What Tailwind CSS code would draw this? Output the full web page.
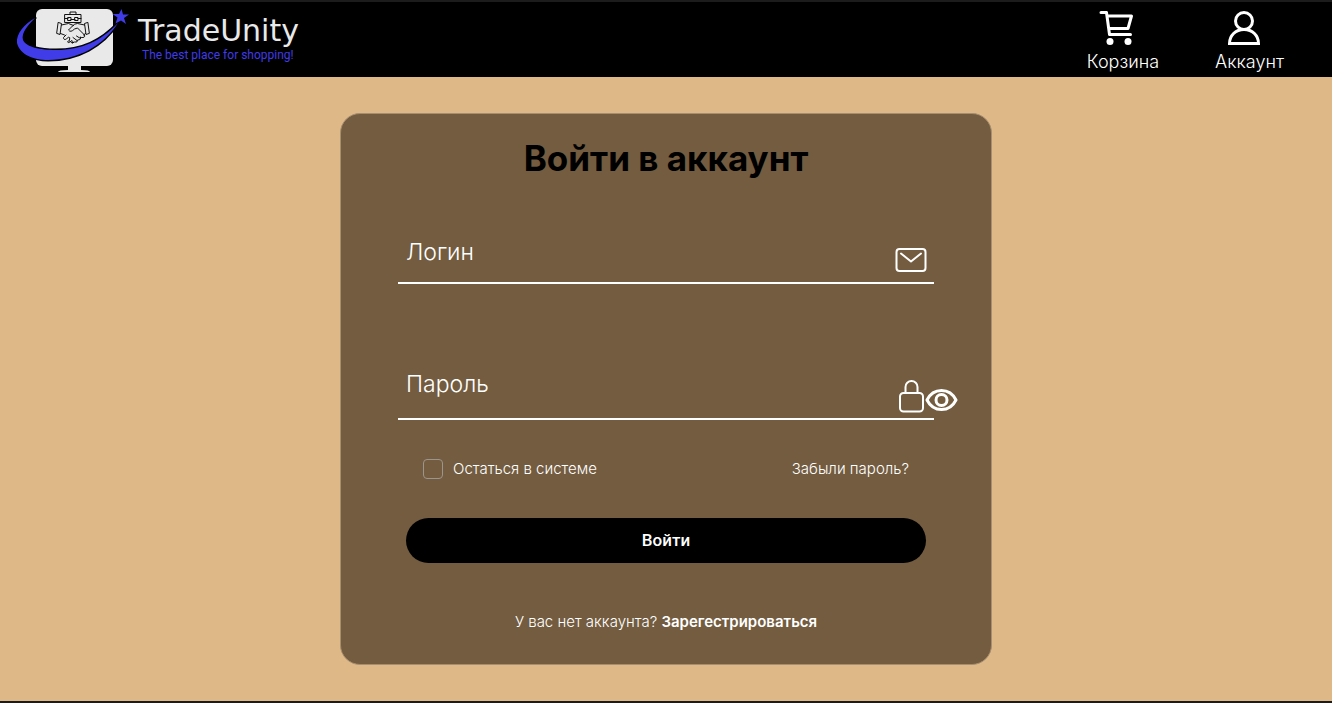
<!DOCTYPE html>
<html lang="ru">
<head>
<meta charset="utf-8">
<meta name="viewport" content="width=device-width, initial-scale=1">
<title>TradeUnity</title>
<script src="https://cdn.jsdelivr.net/npm/@tailwindcss/browser@4"></script>
</head>
<body class="flex min-h-screen flex-col border-y-2 border-[#1c1c1c] bg-[#deb887] font-['Inter',sans-serif] font-light text-white">
<header class="flex h-[75px] items-start justify-between bg-black pr-12 pl-4">
  <a href="#" class="flex items-start gap-2">
    <svg class="mt-1 h-[68px] w-[114px]" viewBox="16 6 114 68" aria-hidden="true">
      <rect x="36" y="9" width="77" height="57" rx="6" fill="#e9e9e9"/>
      <path d="M68 65h13v5q9 0 9 2H58q0-2 10-2z" fill="#e9e9e9"/>
      <path d="M35 18C24 24 16 34 17 43C20 55 34 60 48 60C78 60 103 46 118 23C101 41 82 50 56 50C40 50 26 47 23 40C21 33 28 25 35 18z" fill="#403ce8" stroke="#000" stroke-width="3" stroke-linejoin="round" paint-order="stroke"/>
      <path d="M121.500 9l1.500 5.500 6 0-5 3.500 2 6-5-3.500-5.500 3 2-6-5-3.500 6.500 0z" fill="#403ce8"/>
      <g fill="none" stroke="#111" stroke-width="1" stroke-linejoin="round" stroke-linecap="round">
        <path d="M65 14.500h16v8H65zM70 14.500v-2.500h6v2.500M65 18.500h3M71 19.500h4M78 18.500h3M68 17.500h3v3h-3zM75 17.500h3v3h-3z"/>
        <path d="M58.500 22.500l3 1-1.500 11-3-1zM87.500 22.500l-3 1 1.500 11 3-1zM61.500 25l7-1.500 5 2M84.500 25l-7-1.500q-3 0-5 2.500l-4 4q2 3 6-1l3-1 7 7q1 3-3 2.500M60.500 33.500l4 1.500M85.500 33.500l-2 1.500M80.500 37q1 3-3 3 0 3-3 2l-2 1-3-2M76.500 36l4 2.500M73 37.500l4 3M66 35l-2.500 2.500q0 3 3 1.500l2-2q2 0 1 3l-2 2q1 1.500 3-.500l1.500-1q1.500 1 .500 2.500"/>
      </g>
    </svg>
    <span class="flex flex-col pt-3">
      <span class="font-['DejaVu_Sans',sans-serif] text-[30px] leading-[34px] font-normal text-[#e9e9e9]">TradeUnity</span>
      <span class="pl-1 font-['Roboto',sans-serif] text-[12px] leading-[14px] font-normal text-[#403ce8]">The best place for shopping!</span>
    </span>
  </a>
  <nav class="flex gap-14 pt-1.5 text-[18px] leading-5">
    <a href="#" class="flex flex-col items-center gap-1.5">
      <svg class="mr-3 h-[38px] w-10" viewBox="1098 8 40 38" fill="none" stroke="#fff" stroke-width="3" stroke-linecap="round" stroke-linejoin="round" aria-hidden="true"><path d="M1102 12.500h5.500l3 22h21M1108.500 16h24l-3.500 12.500h-19"/><circle cx="1111" cy="41.500" r="3.500" fill="#fff" stroke="none"/><circle cx="1129" cy="41.500" r="3.500" fill="#fff" stroke="none"/></svg>
      Корзина
    </a>
    <a href="#" class="flex flex-col items-center gap-1.5">
      <svg class="mr-3 h-[38px] w-10" viewBox="1224 8 40 38" fill="none" stroke="#fff" stroke-width="3" aria-hidden="true"><circle cx="1244" cy="21" r="8.500"/><path d="M1229.500 43.500h29c0-8-6-14-14.500-14s-14.500 6-14.500 14z"/></svg>
      Аккаунт
    </a>
  </nav>
</header>
<main class="flex grow items-start justify-center px-4 py-9">
  <form class="w-full max-w-[652px] rounded-[20px] border border-[#a78e71] bg-[#735c3f] px-[57px] pt-6 pb-8">
    <h1 class="text-center text-[35px] leading-10 font-bold text-black">Войти в аккаунт</h1>
    <div class="relative mt-14">
      <label for="login" class="pointer-events-none absolute top-0 left-2 text-[23px] leading-9">Логин</label>
      <input id="login" type="text" class="block h-[50px] w-full border-b-2 border-white bg-transparent pr-12 pl-2 text-[23px] outline-none">
      <svg class="pointer-events-none absolute top-[13px] right-[7px] h-[26px] w-8" viewBox="0 0 32 26" fill="none" stroke="#fff" stroke-width="2" stroke-linecap="round" stroke-linejoin="round" aria-hidden="true"><rect x="1.500" y="2" width="29" height="22" rx="3"/><path d="M6 6.500l10 8 10-8"/></svg>
    </div>
    <div class="relative mt-[82px]">
      <label for="password" class="pointer-events-none absolute top-0 left-2 text-[23px] leading-9">Пароль</label>
      <input id="password" type="password" class="block h-[54px] w-full border-b-2 border-white bg-transparent pr-12 pl-2 text-[23px] outline-none">
      <svg class="pointer-events-none absolute top-[13px] right-[9px] h-[34px] w-[27px]" viewBox="0 0 27 34" fill="none" stroke="#fff" stroke-width="2" aria-hidden="true"><rect x="2" y="14" width="23" height="18.500" rx="3.500"/><path d="M7.500 14V8a6 6 0 0 1 12 0v6"/></svg>
      <button type="button" aria-label="Показать пароль" class="absolute top-[22px] -right-6">
        <svg class="h-6 w-[33px]" viewBox="0 0 33 24" fill="none" stroke="#fff" stroke-width="3" stroke-linejoin="round" aria-hidden="true"><path d="M2 12C5 6 10 2.500 16.500 2.500S28 6 31 12c-3 6-8 9.500-14.500 9.500S5 18 2 12z"/><circle cx="16.500" cy="12" r="5.500"/></svg>
      </button>
    </div>
    <div class="mt-[39px] flex items-center justify-between px-[25px] text-[15px] leading-5">
      <label class="flex items-center gap-2.5"><input type="checkbox" class="size-5 appearance-none rounded border border-[#9c958c] checked:bg-black">Остаться в системе</label>
      <a href="#">Забыли пароль?</a>
    </div>
    <div class="mt-[39px] px-2">
      <button type="submit" class="h-[45px] w-full rounded-full bg-black font-['Roboto',sans-serif] text-[17px] font-medium">Войти</button>
    </div>
    <p class="mt-[49px] text-center text-[15px] leading-5">У вас нет аккаунта? <a href="#" class="font-semibold">Зарегестрироваться</a></p>
  </form>
</main>
</body>
</html>
